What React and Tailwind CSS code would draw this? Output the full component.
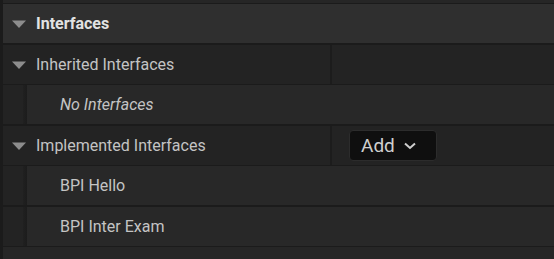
import React from "react";

function Caret() {
  return (
    <svg width="16" height="10" viewBox="0 0 16 10" className="shrink-0 mt-[1px]">
      <path d="M1 1.5 H15 L8 9 Z" fill="#8d8d8d" />
    </svg>
  );
}

function ParentRow({ label, bold, children, header }) {
  return (
    <div
      className={`h-[39px] flex items-center ${header ? "bg-[#2f2f2f]" : "bg-[#232323]"}`}
    >
      <div className="w-[327px] h-full flex items-center pl-[8px] gap-[9px] shrink-0">
        <Caret />
        <span
          className={`text-[16px] ${bold ? "font-bold text-[#e2e2e2]" : "text-[#c4c4c4]"}`}
        >
          {label}
        </span>
      </div>
      {!header && <div className="w-[2px] h-full bg-[#1c1c1c]" />}
      <div className="flex-1 h-full flex items-center pl-[17px]">{children}</div>
    </div>
  );
}

function ChildRow({ label, italic }) {
  return (
    <div className="h-[39px] flex">
      <div className="w-[20px] bg-[#232323]" />
      <div className="w-[4px] bg-gradient-to-r from-[#202020] to-[#1c1c1c]" />
      <div className="flex-1 bg-[#282828] flex items-center pl-[33px]">
        <span className={`text-[16px] text-[#c4c4c4] ${italic ? "italic" : ""}`}>
          {label}
        </span>
      </div>
    </div>
  );
}

export default function App() {
  return (
    <div
      className="w-[554px] h-[259px] overflow-hidden bg-[#1b1b1b] pl-[3px] flex flex-col"
      style={{ fontFamily: "Roboto, 'Noto Sans', sans-serif" }}
    >
      {/* Top edge */}
      <div className="h-[3px] bg-[#262626] shrink-0" />

      <div className="mt-[1px]">
        <ParentRow label="Interfaces" bold header />
      </div>

      <div className="mt-[2px]">
        <ParentRow label="Inherited Interfaces" />
      </div>

      <div className="mt-[1px]">
        <ChildRow label="No Interfaces" italic />
      </div>

      <div className="mt-[2px]">
        <ParentRow label="Implemented Interfaces">
          <button className="h-[31px] w-[88px] rounded-[4px] bg-[#0f0f0f] border border-[#2c2c2c] flex items-center pl-[11px] gap-[8px]">
            <span className="text-[19px] text-[#cfcfcf] leading-none">Add</span>
            <svg width="14" height="10" viewBox="0 0 14 10">
              <path d="M2 2.5 L7 7 L12 2.5" stroke="#cfcfcf" strokeWidth="2" fill="none" />
            </svg>
          </button>
        </ParentRow>
      </div>

      <div className="mt-[1px]">
        <ChildRow label="BPI Hello" />
      </div>

      <div className="mt-[2px]">
        <ChildRow label="BPI Inter Exam" />
      </div>

      <div className="mt-[1px] flex-1 bg-[#262626]" />
    </div>
  );
}
